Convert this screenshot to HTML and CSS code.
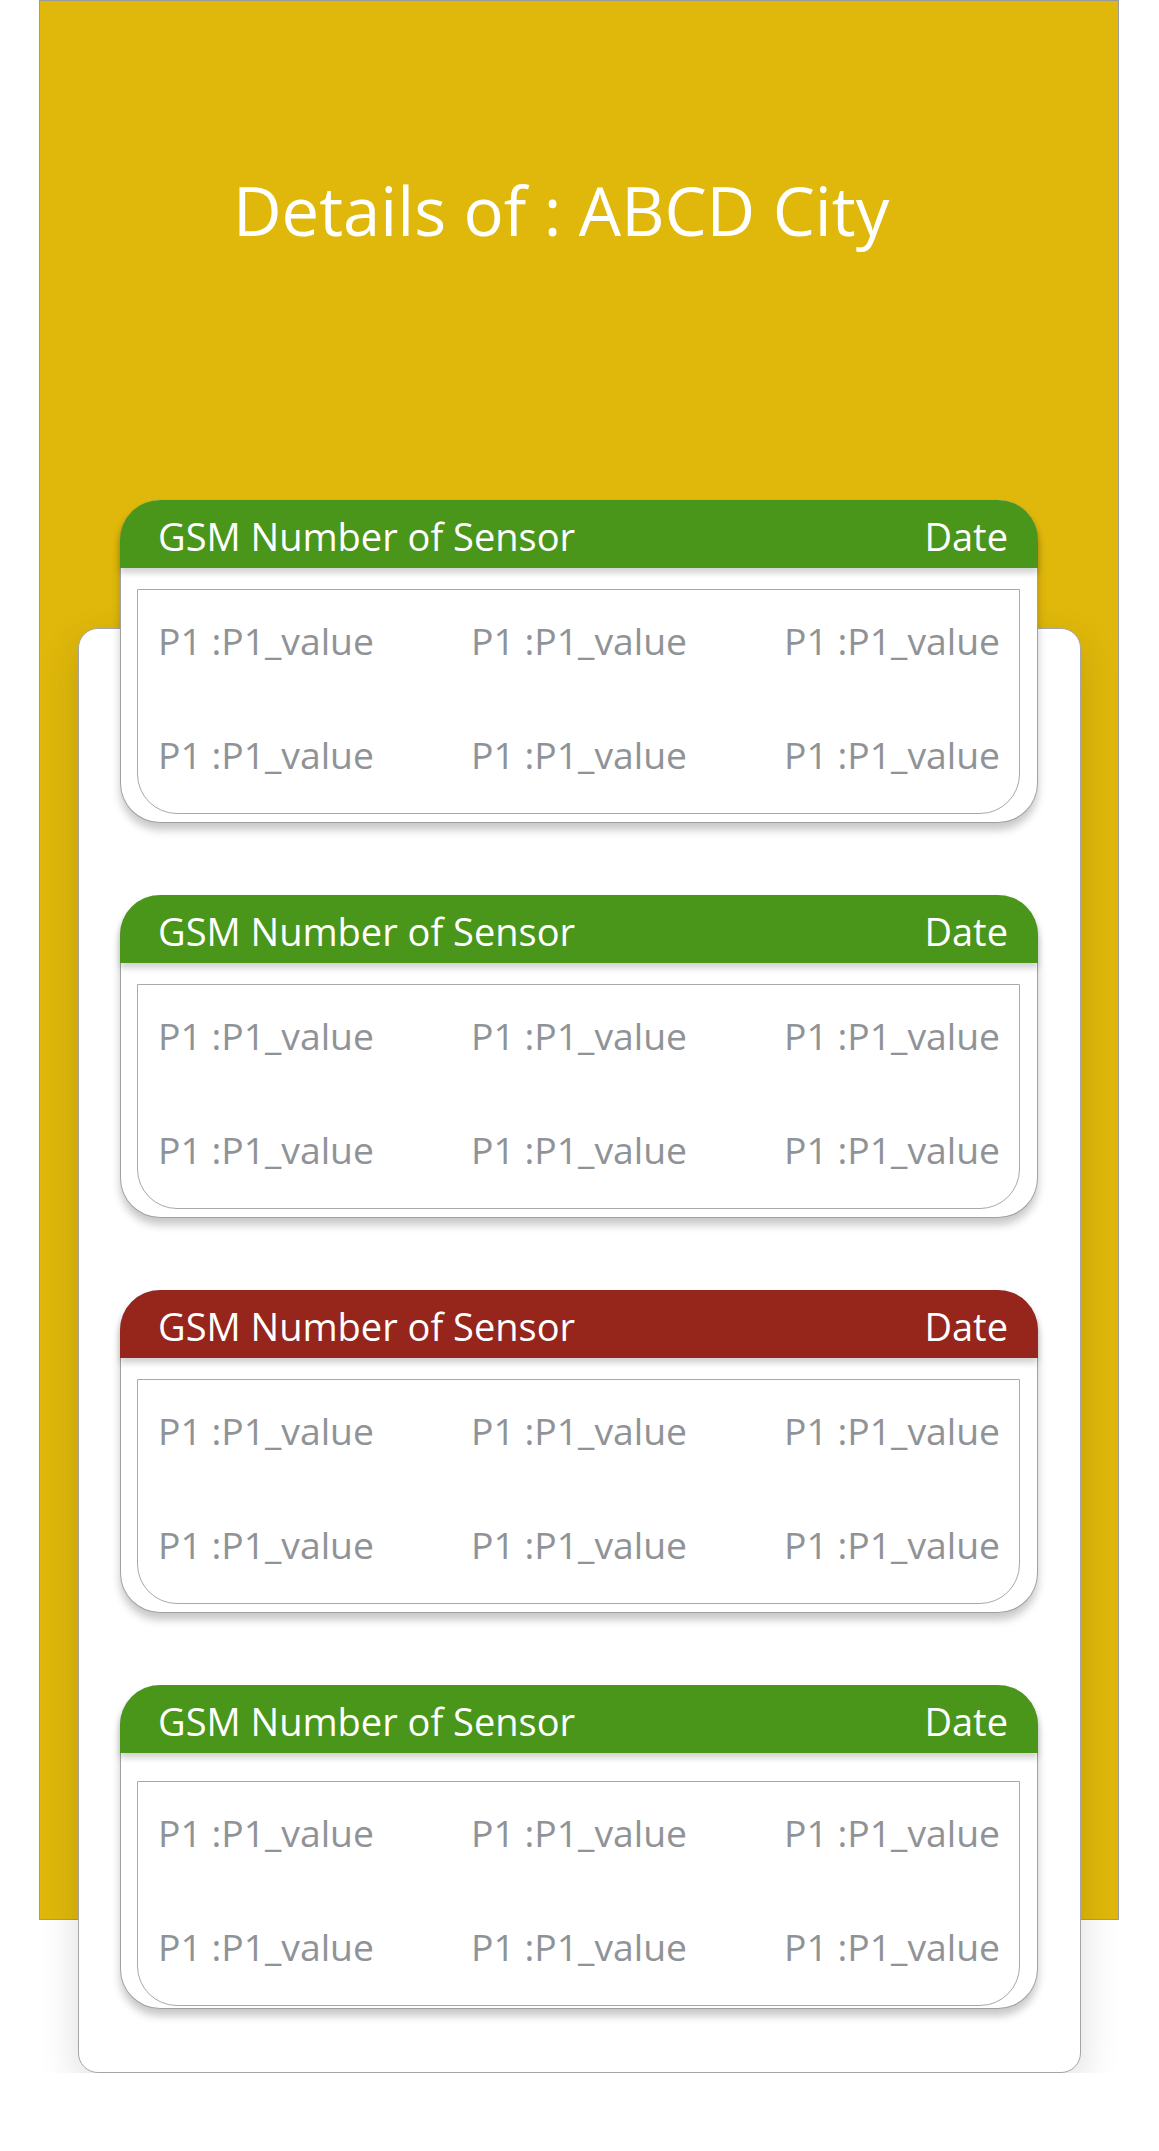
FILE: index.html
```html
<!DOCTYPE html>
<html lang="en">
<head>
<meta charset="utf-8">
<title>Details of : ABCD City</title>
<link rel="stylesheet" href="styles.css">
</head>
<body>
<div class="hero">
  <h1 class="hero-title">Details of : ABCD City</h1>
</div>
<div class="sheet">
  <div class="cards">
    <div class="card">
      <div class="card-head head-ok"><span>GSM Number of Sensor</span><span>Date</span></div>
      <div class="card-body">
        <div class="row"><span class="val">P1 :P1_value</span><span class="val">P1 :P1_value</span><span class="val">P1 :P1_value</span></div>
        <div class="row"><span class="val">P1 :P1_value</span><span class="val">P1 :P1_value</span><span class="val">P1 :P1_value</span></div>
      </div>
    </div>
    <div class="card">
      <div class="card-head head-ok"><span>GSM Number of Sensor</span><span>Date</span></div>
      <div class="card-body">
        <div class="row"><span class="val">P1 :P1_value</span><span class="val">P1 :P1_value</span><span class="val">P1 :P1_value</span></div>
        <div class="row"><span class="val">P1 :P1_value</span><span class="val">P1 :P1_value</span><span class="val">P1 :P1_value</span></div>
      </div>
    </div>
    <div class="card">
      <div class="card-head head-alert"><span>GSM Number of Sensor</span><span>Date</span></div>
      <div class="card-body">
        <div class="row"><span class="val">P1 :P1_value</span><span class="val">P1 :P1_value</span><span class="val">P1 :P1_value</span></div>
        <div class="row"><span class="val">P1 :P1_value</span><span class="val">P1 :P1_value</span><span class="val">P1 :P1_value</span></div>
      </div>
    </div>
    <div class="card card-last">
      <div class="card-head head-ok"><span>GSM Number of Sensor</span><span>Date</span></div>
      <div class="card-body">
        <div class="row"><span class="val">P1 :P1_value</span><span class="val">P1 :P1_value</span><span class="val">P1 :P1_value</span></div>
        <div class="row"><span class="val">P1 :P1_value</span><span class="val">P1 :P1_value</span><span class="val">P1 :P1_value</span></div>
      </div>
    </div>
  </div>
</div>
</body>
</html>
```
FILE: styles.css
```css
* { box-sizing: border-box; }

body {
  margin: 0;
  background: #ffffff;
  font-family: "Open Sans", "Noto Sans", sans-serif;
}

.hero {
  margin-left: 39px;
  width: 1080px;
  height: 1920px;
  background: #e0b80b;
  border: 1px solid #9a9a9a;
  padding-top: 176px;
  padding-left: 193px;
}

.hero-title {
  margin: 0;
  font-size: 67px;
  line-height: 1;
  font-weight: 400;
  color: #ffffff;
}

.sheet {
  position: relative;
  margin-top: -1292px;
  margin-left: 78px;
  width: 1003px;
  height: 1445px;
  background: #ffffff;
  border: 1px solid #a5a5a5;
  border-radius: 20px;
  box-shadow: 0 14px 40px rgba(0, 0, 0, 0.14);
}

.cards {
  margin-top: -129px;
  padding: 0 42px 0 41px;
  display: flex;
  flex-direction: column;
  gap: 72px;
}

.card {
  height: 323px;
  background: #ffffff;
  border: 1px solid #a0a0a0;
  border-top: 0;
  border-radius: 40px;
  box-shadow: 0 7px 9px rgba(0, 0, 0, 0.22);
  padding: 0 17px 8px 16px;
  display: flex;
  flex-direction: column;
}

.card-head {
  position: relative;
  height: 68px;
  margin: 0 -18px 21px -17px;
  border-radius: 40px 40px 0 0;
  padding: 4px 30px 0 38px;
  display: flex;
  justify-content: space-between;
  align-items: center;
  color: #ffffff;
  font-size: 38px;
  line-height: 1;
  box-shadow: 0 5px 6px rgba(0, 0, 0, 0.18);
}

.head-ok { background: #4a961b; }
.head-alert { background: #96251c; }

.card-body {
  height: 225px;
  border: 1px solid #a9a9a9;
  border-radius: 0 0 40px 40px;
  padding: 32px 19px 0 20px;
  display: flex;
  flex-direction: column;
  gap: 77px;
}

.card-last { height: 324px; padding-bottom: 2px; }
.card-last .card-head { margin-bottom: 28px; }

.row {
  display: flex;
  justify-content: space-between;
}

.val {
  font-size: 37.3px;
  line-height: 1;
  color: #8f9397;
  white-space: nowrap;
}
```
